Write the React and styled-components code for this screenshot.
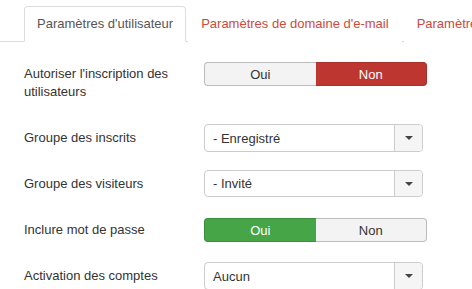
import styled, { createGlobalStyle } from "styled-components";

const GlobalStyle = createGlobalStyle`
  html, body {
    margin: 0;
    padding: 0;
    background: #fff;
    font-family: "Liberation Sans", Arial, sans-serif;
    font-size: 13px;
    color: #333;
  }
`;

const Page = styled.div`
  padding: 6px 0 0 24px;
  width: 472px;
  height: 289px;
  box-sizing: border-box;
  overflow: hidden;
`;

const Tabs = styled.ul`
  display: flex;
  margin: 0;
  padding: 0;
  list-style: none;
  border-bottom: 1px solid #ddd;
  white-space: nowrap;
  margin-left: -24px;
  padding-left: 24px;
`;

const Tab = styled.li`
  margin: 0 2px -1px 0;
  padding: 8px 12px;
  line-height: 18px;
  border: 1px solid ${(p) => (p.$active ? "#ddd" : "transparent")};
  border-bottom-color: ${(p) => (p.$active ? "#fff" : "transparent")};
  border-radius: 4px 4px 0 0;
  background: #fff;
  color: ${(p) => (p.$active ? "#555" : "#cd4a3e")};
`;

const Row = styled.div`
  display: flex;
  align-items: ${(p) => (p.$top ? "flex-start" : "center")};
  margin-top: ${(p) => p.$space}px;
`;

const Label = styled.div`
  width: 180px;
  flex: none;
  line-height: 18px;
  padding-top: ${(p) => (p.$top ? 3 : 0)}px;
  color: #333;
`;

const Toggle = styled.div`
  display: flex;
  width: 223px;
  height: 24px;
`;

const ToggleButton = styled.div`
  flex: 1;
  display: flex;
  align-items: center;
  justify-content: center;
  box-sizing: border-box;
  border: 1px solid ${(p) => (p.$on ? p.$edge : "#bbb")};
  background: ${(p) => (p.$on ? p.$color : "#f3f3f3")};
  color: ${(p) => (p.$on ? "#fff" : "#333")};
  &:first-child {
    border-radius: 4px 0 0 4px;
    border-right: none;
  }
  &:last-child {
    border-radius: 0 4px 4px 0;
    border-left: none;
  }
`;

const Select = styled.div`
  display: flex;
  width: 219px;
  height: ${(p) => p.$h || 28}px;
  box-sizing: border-box;
  border: 1px solid #ccc;
  border-radius: 4px;
  background: #fff;
  overflow: hidden;
`;

const SelectText = styled.div`
  flex: 1;
  display: flex;
  align-items: center;
  padding-left: 8px;
  color: #333;
`;

const Caret = styled.div`
  width: 27px;
  display: flex;
  align-items: center;
  justify-content: center;
  border-left: 1px solid #ccc;
  background: #f5f5f5;
  &::after {
    content: "";
    border-left: 4px solid transparent;
    border-right: 4px solid transparent;
    border-top: 4px solid #444;
  }
`;

const SelectBox = ({ value, h }) => (
  <Select $h={h}>
    <SelectText>{value}</SelectText>
    <Caret />
  </Select>
);

const YesNo = ({ yes, color, edge }) => (
  <Toggle>
    <ToggleButton $on={yes} $color={color} $edge={edge}>Oui</ToggleButton>
    <ToggleButton $on={!yes} $color={color} $edge={edge}>Non</ToggleButton>
  </Toggle>
);

export default function App() {
  return (
    <>
      <GlobalStyle />
      <Page>
        <Tabs>
          <Tab $active>Paramètres d'utilisateur</Tab>
          <Tab>Paramètres de domaine d'e-mail</Tab>
          <Tab>Paramètres de mot de passe</Tab>
        </Tabs>

        <Row $top $space={20}>
          <Label $top>
            Autoriser l'inscription des
            <br />
            utilisateurs
          </Label>
          <YesNo yes={false} color="#bd362f" edge="#a8302a" />
        </Row>

        <Row $space={23}>
          <Label>Groupe des inscrits</Label>
          <SelectBox value="- Enregistré" />
        </Row>

        <Row $space={18}>
          <Label>Groupe des visiteurs</Label>
          <SelectBox value="- Invité" h={27} />
        </Row>

        <Row $space={21}>
          <Label>Inclure mot de passe</Label>
          <YesNo yes color="#46a546" edge="#3b8f3b" />
        </Row>

        <Row $space={20}>
          <Label>Activation des comptes</Label>
          <SelectBox value="Aucun" />
        </Row>
      </Page>
    </>
  );
}
